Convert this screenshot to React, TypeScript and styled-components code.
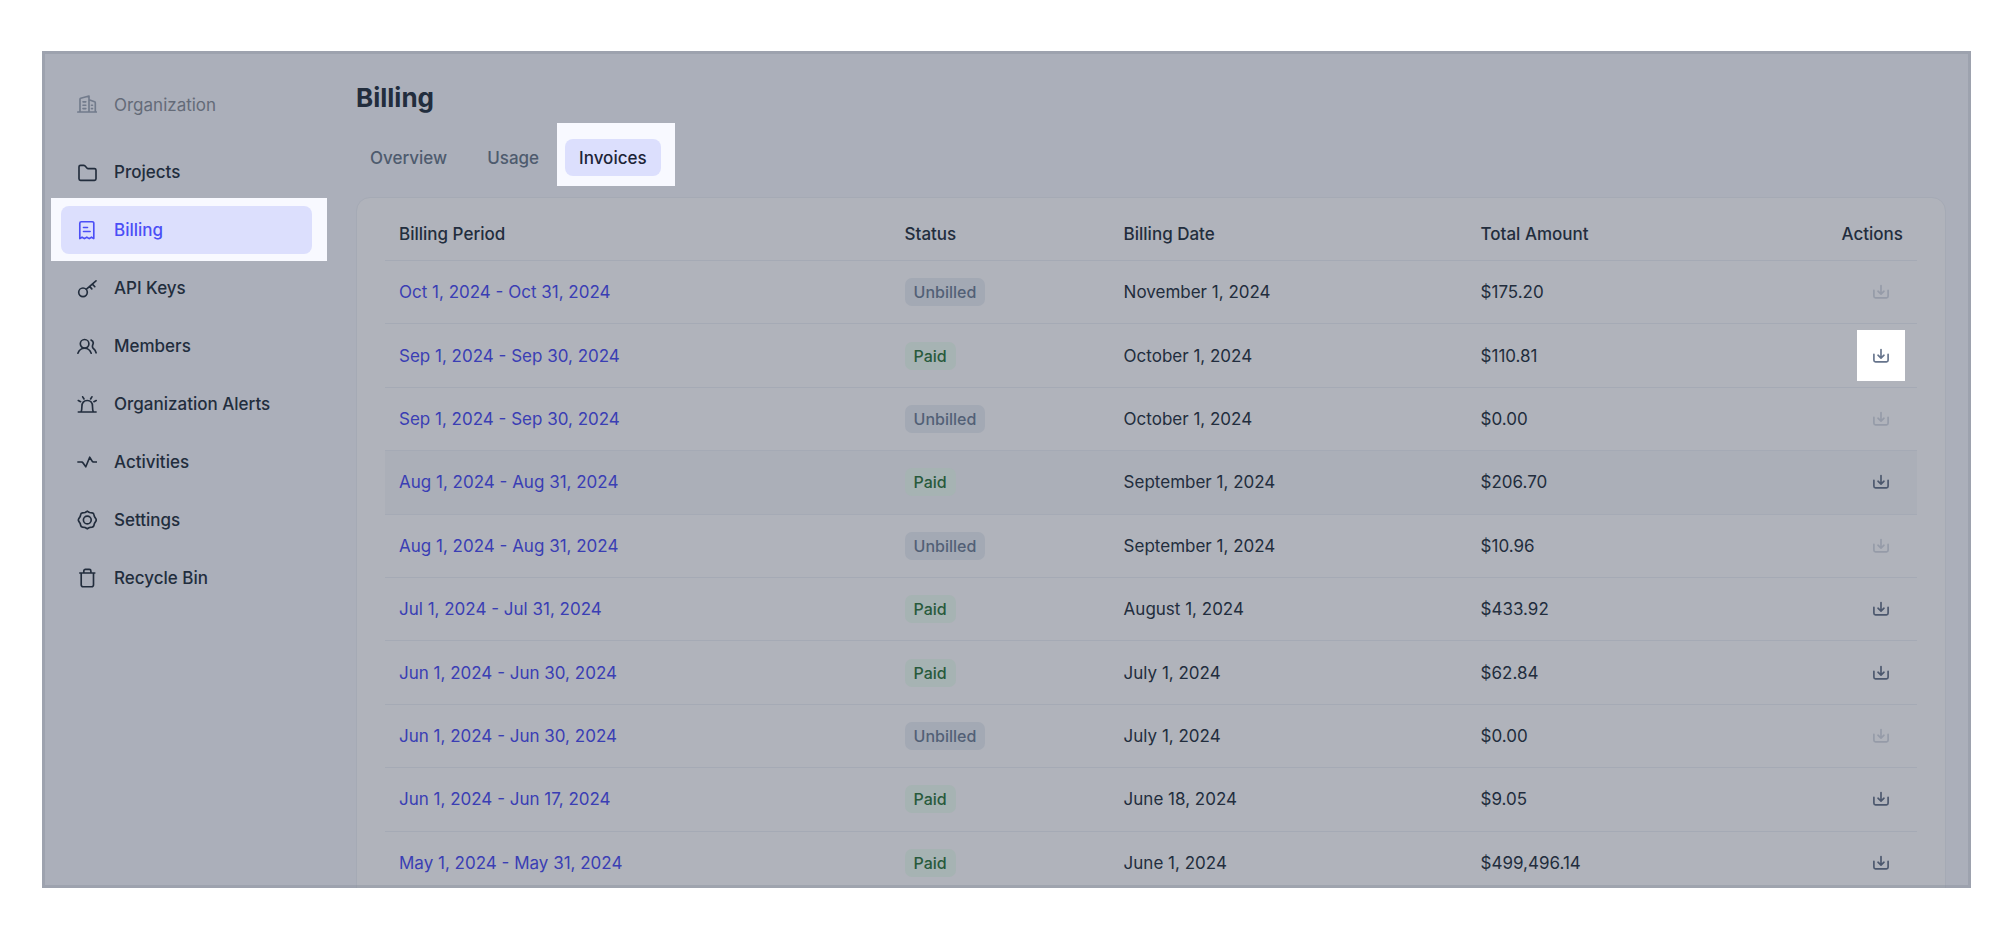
import React from "react";
import styled, { createGlobalStyle, css } from "styled-components";

const color = {
  text: "#222d3d",
  muted: "#4e5b6e",
  faint: "#646b78",
  link: "#3a3eb4",
  accent: "#4b4ef6",
  pill: "#dcdffd",
  spotlight: "#f8f9ff",
  shell: "#abafba",
  card: "#b0b3bb",
  line: "#a5aab5",
};

const GlobalStyle = createGlobalStyle`
  * { box-sizing: border-box; }
  body { margin: 0; background: #fff; }
  body, button { font-family: Inter, "Liberation Sans", sans-serif; }
`;

const Page = styled.div`
  height: 100vh;
  padding: 51px 42px;
`;

const Frame = styled.div`
  position: relative;
  display: flex;
  height: 100%;
  padding: 3px;
  overflow: hidden;
  background: ${color.shell};
  color: ${color.text};
  font-size: 17px;
  line-height: 24px;

  &::after {
    content: "";
    position: absolute;
    inset: 0;
    border: 3px solid rgba(139, 147, 160, 0.45);
    pointer-events: none;
  }
`;

const Sidebar = styled.nav`
  flex: 0 0 283px;
  padding: 27px 16px;
`;

const SidebarHeading = styled.div`
  display: flex;
  align-items: center;
  gap: 17px;
  height: 48px;
  padding: 0 16px;
  margin-bottom: 19px;
  color: ${color.faint};

  svg {
    color: #727b8c;
  }
`;

const NavList = styled.ul`
  display: flex;
  flex-direction: column;
  gap: 10px;
  margin: 0;
  padding: 0;
  list-style: none;
`;

const NavLink = styled.a<{ $active?: boolean }>`
  position: relative;
  isolation: isolate;
  display: flex;
  align-items: center;
  gap: 17px;
  height: 48px;
  padding: 0 16px;
  border-radius: 8px;
  color: inherit;
  font-weight: 500;
  text-decoration: none;

  ${(p) =>
    p.$active &&
    css`
      color: ${color.accent};

      &::before,
      &::after {
        content: "";
        position: absolute;
        z-index: -1;
      }
      &::before {
        inset: -8px -15px -7px -10px;
        background: ${color.spotlight};
      }
      &::after {
        inset: 0;
        border-radius: 8px;
        background: ${color.pill};
      }
    `}
`;

const Icon = styled.svg`
  flex: none;
  fill: none;
  stroke: currentColor;
  stroke-width: 1.65;
  stroke-linecap: round;
  stroke-linejoin: round;
`;

const Main = styled.main`
  flex: 1;
  min-width: 0;
  padding: 28px 22px 0 28px;
`;

const Title = styled.h1`
  margin: 0 0 25px;
  font-size: 26px;
  line-height: 32px;
  font-weight: 700;
`;

const Tabs = styled.div`
  display: flex;
  gap: 12px;
  margin-bottom: 21px;
`;

const Tab = styled.button<{ $active?: boolean }>`
  position: relative;
  isolation: isolate;
  height: 37px;
  padding: 0 14px;
  border: 0;
  background: none;
  color: ${color.muted};
  font-size: 17px;
  line-height: 24px;
  font-weight: 500;

  ${(p) =>
    p.$active &&
    css`
      color: #1c2437;

      &::before,
      &::after {
        content: "";
        position: absolute;
        z-index: -1;
      }
      &::before {
        inset: -16px -14px -10px -8px;
        background: ${color.spotlight};
      }
      &::after {
        inset: 0;
        border-radius: 8px;
        background: ${color.pill};
      }
    `}
`;

const Card = styled.section`
  padding: 0 28px 28px;
  border: 1px solid ${color.line};
  border-radius: 14px;
  background: ${color.card};
`;

const Table = styled.table`
  width: 100%;
  height: 697px;
  table-layout: fixed;
  border-collapse: separate;
  border-spacing: 0;
  text-align: left;
`;

const Col = styled.col<{ $share?: number }>`
  width: ${(p) => (p.$share ? `${p.$share}%` : "auto")};
`;

const HeadCell = styled.th<{ $end?: boolean }>`
  height: 63px;
  padding: 10px 14px 0;
  border-bottom: 1px solid ${color.line};
  font-weight: 500;
  text-align: ${(p) => (p.$end ? "right" : "left")};
`;

const Cell = styled.td<{ $end?: boolean }>`
  padding: 0 14px;
  border-bottom: 1px solid ${color.line};
  text-align: ${(p) => (p.$end ? "right" : "left")};
`;

const Row = styled.tr<{ $hovered?: boolean }>`
  background: ${(p) => (p.$hovered ? "#abafb8" : "transparent")};
`;

const PeriodLink = styled.a`
  color: ${color.link};
  text-decoration: none;
`;

const Badge = styled.span<{ $paid: boolean }>`
  display: inline-block;
  padding: 2px 9px;
  border-radius: 7px;
  background: ${(p) => (p.$paid ? "#a6b3b3" : "#a3a9b4")};
  color: ${(p) => (p.$paid ? "#285a3c" : "#526076")};
  font-size: 16px;
  font-weight: 500;
`;

const DownloadButton = styled.button<{ $spotlit: boolean }>`
  position: relative;
  isolation: isolate;
  display: inline-flex;
  align-items: center;
  justify-content: center;
  width: 44px;
  height: 42px;
  padding: 0;
  border: 0;
  background: none;
  color: #4b576d;
  vertical-align: middle;

  &:disabled {
    color: #959ba8;
  }

  ${(p) =>
    p.$spotlit &&
    css`
      color: #66748c;

      &::before {
        content: "";
        position: absolute;
        z-index: -1;
        inset: -5px -2px -4px;
        background: #fff;
      }
    `}
`;

function NavIcon({ children }: { children: React.ReactNode }) {
  return (
    <Icon width="20" height="20" viewBox="0 0 20 20" aria-hidden="true">
      {children}
    </Icon>
  );
}

const buildingIcon = (
  <NavIcon>
    <path d="M.8 17h19M3 17V4.2a1 1 0 0 1 .7-.9L12 1v16M12 4.8l5.6 2a1 1 0 0 1 .7.9V17M6 6.8h2.8M6 10.2h2.8M6 13.6h2.8M14.5 10.2h1M14.5 13.6h1" />
  </NavIcon>
);

const navItems = [
  {
    label: "Projects",
    icon: <path d="M2 4.8a1.5 1.5 0 0 1 1.5-1.5h3.2c.5 0 .9.2 1.2.5l2 2.2c.3.4.8.6 1.3.6h6.3A1.5 1.5 0 0 1 19 8v8.8a1.5 1.5 0 0 1-1.5 1.5h-14A1.5 1.5 0 0 1 2 16.8z" />,
  },
  {
    label: "Billing",
    icon: (
      <path d="M2.8 18.6V3.2a1.5 1.5 0 0 1 1.5-1.5h11a1.5 1.5 0 0 1 1.5 1.5v15.4l-2.3-1.4-2.3 1.4-2.4-1.4-2.4 1.4-2.3-1.4zM6.5 7.5h4M6.5 11.5h6.6" />
    ),
  },
  {
    label: "API Keys",
    icon: (
      <>
        <circle cx="6" cy="14.3" r="4.3" />
        <path d="M9.2 11.3 19 2.8M15.4 6l2.4 2.7M12.6 8.4l2.2 2.5" />
      </>
    ),
  },
  {
    label: "Members",
    icon: (
      <>
        <circle cx="7.6" cy="7.8" r="4.3" />
        <path d="M.9 17.2c1.2-3.2 3.6-5 6.7-5s5.4 1.8 6.6 5M14 4c2 1 2.7 2.4 2 4.2-.9 2-.9 3.3.4 4.3 1.3.9 2.2 2.4 2.7 4.3" />
      </>
    ),
  },
  {
    label: "Organization Alerts",
    icon: (
      <path d="M1.3 18h17.8M4 18c.7-1.5.9-3.3.9-5.6 0-3.5 1.9-5.9 5.3-5.9s5.3 2.4 5.3 5.9c0 2.3.2 4.1.9 5.6M1.3 6.5l2.3 1.2M5.7 2.8l1.3 2.2M14.9 2.8 13.6 5M19.2 6.5l-2.3 1.2" />
    ),
  },
  {
    label: "Activities",
    icon: <path d="M.9 10h4l1 .7L8.8 14.8 12.7 5.2l2.6 4.2.9.6h3.2" />,
  },
  {
    label: "Settings",
    icon: (
      <>
        <circle cx="10.3" cy="10" r="3.9" />
        <path d="M10.3 1.2 12.5 2.5 15.1 2.9Q16.7 3.2 16.9 4.5L17.4 6.5 19 9Q19.5 10 19 11L17.4 13.5 16.9 15.5Q16.7 16.8 15.1 17.1L12.5 17.5 10.3 18.8 8.1 17.5 5.5 17.1Q3.9 16.8 3.7 15.5L3.2 13.5 1.6 11Q1.1 10 1.6 9L3.2 6.5 3.7 4.5Q3.9 3.2 5.5 2.9L8.1 2.5z" />
      </>
    ),
  },
  {
    label: "Recycle Bin",
    icon: (
      <path d="M2.8 5h15M4.2 5v11.7a2 2 0 0 0 2 2h8.3a2 2 0 0 0 2-2V5M6.8 5V3a1.6 1.6 0 0 1 1.6-1.6h3.9A1.6 1.6 0 0 1 13.9 3v2" />
    ),
  },
];

type Invoice = { period: string; paid: boolean; date: string; total: string };

const invoices: Invoice[] = [
  { period: "Oct 1, 2024 - Oct 31, 2024", paid: false, date: "November 1, 2024", total: "$175.20" },
  { period: "Sep 1, 2024 - Sep 30, 2024", paid: true, date: "October 1, 2024", total: "$110.81" },
  { period: "Sep 1, 2024 - Sep 30, 2024", paid: false, date: "October 1, 2024", total: "$0.00" },
  { period: "Aug 1, 2024 - Aug 31, 2024", paid: true, date: "September 1, 2024", total: "$206.70" },
  { period: "Aug 1, 2024 - Aug 31, 2024", paid: false, date: "September 1, 2024", total: "$10.96" },
  { period: "Jul 1, 2024 - Jul 31, 2024", paid: true, date: "August 1, 2024", total: "$433.92" },
  { period: "Jun 1, 2024 - Jun 30, 2024", paid: true, date: "July 1, 2024", total: "$62.84" },
  { period: "Jun 1, 2024 - Jun 30, 2024", paid: false, date: "July 1, 2024", total: "$0.00" },
  { period: "Jun 1, 2024 - Jun 17, 2024", paid: true, date: "June 18, 2024", total: "$9.05" },
  { period: "May 1, 2024 - May 31, 2024", paid: true, date: "June 1, 2024", total: "$499,496.14" },
];

const spotlitRow = 1;
const hoveredRow = 3;

export default function App() {
  return (
    <Page>
      <GlobalStyle />
      <Frame>
        <Sidebar aria-label="Organization">
          <SidebarHeading>
            {buildingIcon}
            Organization
          </SidebarHeading>
          <NavList>
            {navItems.map((item) => (
              <li key={item.label}>
                <NavLink href="#" $active={item.label === "Billing"}>
                  <NavIcon>{item.icon}</NavIcon>
                  {item.label}
                </NavLink>
              </li>
            ))}
          </NavList>
        </Sidebar>
        <Main>
          <Title>Billing</Title>
          <Tabs role="tablist">
            {["Overview", "Usage", "Invoices"].map((name) => (
              <Tab
                key={name}
                type="button"
                role="tab"
                aria-selected={name === "Invoices"}
                $active={name === "Invoices"}
              >
                {name}
              </Tab>
            ))}
          </Tabs>
          <Card>
            <Table>
              <colgroup>
                <Col $share={33} />
                <Col $share={14.3} />
                <Col $share={23.3} />
                <Col $share={19} />
                <Col />
              </colgroup>
              <thead>
                <tr>
                  <HeadCell scope="col">Billing Period</HeadCell>
                  <HeadCell scope="col">Status</HeadCell>
                  <HeadCell scope="col">Billing Date</HeadCell>
                  <HeadCell scope="col">Total Amount</HeadCell>
                  <HeadCell scope="col" $end>
                    Actions
                  </HeadCell>
                </tr>
              </thead>
              <tbody>
                {invoices.map((invoice, index) => (
                  <Row key={index} $hovered={index === hoveredRow}>
                    <Cell>
                      <PeriodLink href="#">{invoice.period}</PeriodLink>
                    </Cell>
                    <Cell>
                      <Badge $paid={invoice.paid}>{invoice.paid ? "Paid" : "Unbilled"}</Badge>
                    </Cell>
                    <Cell>{invoice.date}</Cell>
                    <Cell>{invoice.total}</Cell>
                    <Cell $end>
                      <DownloadButton
                        type="button"
                        aria-label={`Download invoice ${invoice.period}`}
                        disabled={!invoice.paid}
                        $spotlit={index === spotlitRow}
                      >
                        <Icon width="16" height="16" viewBox="0 0 16 16" aria-hidden="true">
                          <path d="M.9 6.2v6a1.6 1.6 0 0 0 1.6 1.6h11a1.6 1.6 0 0 0 1.6-1.6v-6M8 1.6v8.4M5 7.2l3 2.9 3-2.9" />
                        </Icon>
                      </DownloadButton>
                    </Cell>
                  </Row>
                ))}
              </tbody>
            </Table>
          </Card>
        </Main>
      </Frame>
    </Page>
  );
}
